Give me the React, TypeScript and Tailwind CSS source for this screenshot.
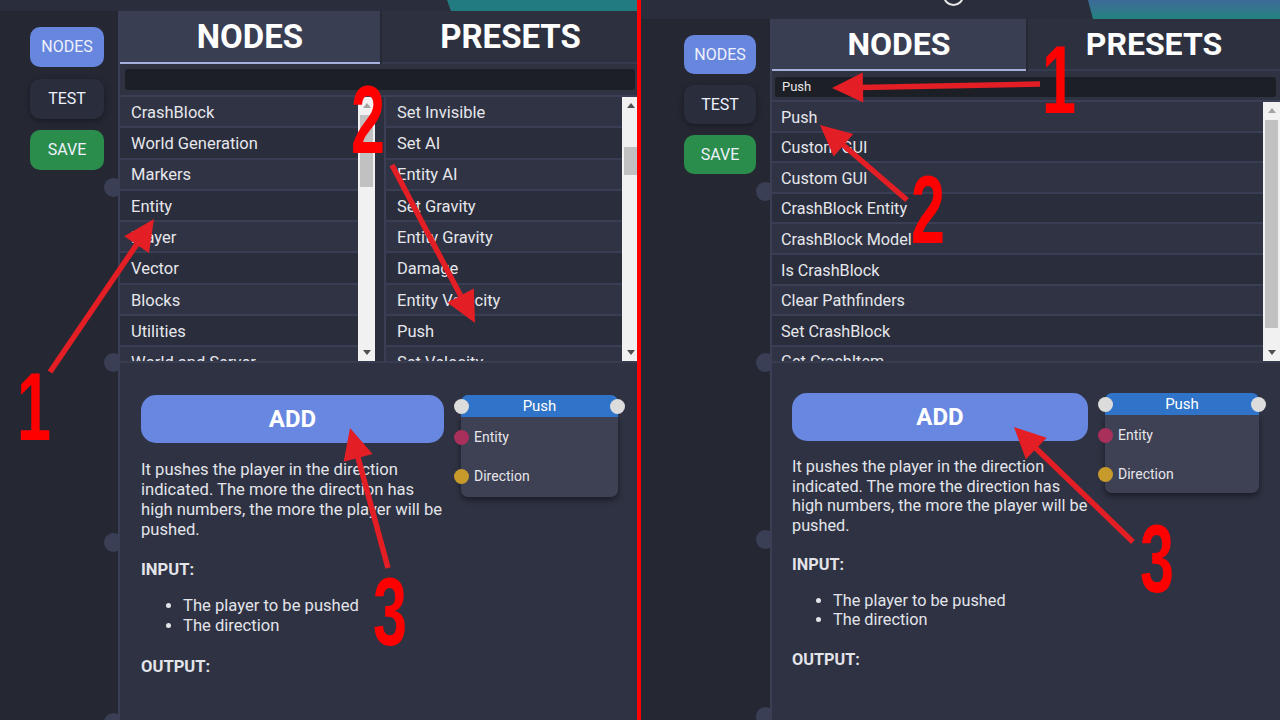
import React from "react";

const LEFT_NODES = ["CrashBlock", "World Generation", "Markers", "Entity", "Player", "Vector", "Blocks", "Utilities", "World and Server"];
const LEFT_PRESETS = ["Set Invisible", "Set AI", "Entity AI", "Set Gravity", "Entity Gravity", "Damage", "Entity Velocity", "Push", "Set Velocity"];
const RIGHT_LIST = ["Push", "Custom GUI", "Custom GUI", "CrashBlock Entity", "CrashBlock Model", "Is CrashBlock", "Clear Pathfinders", "Set CrashBlock", "Get CrashItem"];

function SideButtons({ wrap, btn }: { wrap: string; btn: string }) {
  return (
    <div className={`shrink-0 bg-[#252733] flex flex-col ${wrap}`}>
      <div className={`${btn} rounded-[10px] bg-[#6786de] text-[#eef1fb] flex items-center justify-center`}>NODES</div>
      <div className={`${btn} rounded-[10px] bg-[#2a2d3c] text-[#eef1fb] flex items-center justify-center shadow-[0_2px_6px_rgba(0,0,0,0.35)]`}>TEST</div>
      <div className={`${btn} rounded-[10px] bg-[#2b8d4c] text-[#eef1fb] flex items-center justify-center`}>SAVE</div>
    </div>
  );
}

function Tabs({ h, nodesW, text }: { h: string; nodesW: string; text: string }) {
  return (
    <div className={`${h} shrink-0 flex bg-[#262834]`}>
      <div className={`${nodesW} h-full bg-[#3a3e53] border-b-2 border-[#a6b0dc] flex items-center justify-center text-white font-bold ${text}`}>NODES</div>
      <div className={`flex-1 ml-[2px] h-full bg-[#2d313f] border-b-2 border-[#363a4e] flex items-center justify-center text-white font-bold ${text}`}>PRESETS</div>
    </div>
  );
}

function Rows({ items, rowCls }: { items: string[]; rowCls: string }) {
  return (
    <div className="flex-1 min-w-0 h-full overflow-hidden flex flex-col">
      {items.map((t, i) => (
        <div
          key={i}
          className={`${rowCls} shrink-0 flex items-center pt-[3px] border-b-2 border-[#393e54] text-[#e6e7ec] whitespace-nowrap ${i % 2 === 0 ? "bg-[#2f3343]" : "bg-[#2a2d3b]"}`}
        >
          {t}
        </div>
      ))}
    </div>
  );
}

function Scrollbar({ thumb, upDark }: { thumb: string; upDark?: boolean }) {
  return (
    <div className="w-[17px] shrink-0 h-full bg-[#f1f1f1] flex flex-col">
      <div className="h-[17px] shrink-0 w-full flex items-center justify-center">
        <svg width="8" height="5" viewBox="0 0 8 5"><path d="M4 0L8 5H0Z" fill={upDark ? "#505050" : "#a3a3a3"} /></svg>
      </div>
      <div className="flex-1 w-full px-[2px]">
        <div className={`${thumb} bg-[#c1c1c1] w-full`} />
      </div>
      <div className="h-[17px] shrink-0 w-full flex items-center justify-center">
        <svg width="8" height="5" viewBox="0 0 8 5"><path d="M0 0H8L4 5Z" fill="#505050" /></svg>
      </div>
    </div>
  );
}

function NodeCard({ wrap, body }: { wrap: string; body: string }) {
  return (
    <div className={`relative shrink-0 self-start ${wrap}`}>
      <div className="relative h-[22px] bg-[#2f74c8] rounded-t-[7px] text-white text-[15px] flex items-center justify-center">
        Push
        <span className="absolute -left-[7px] top-[4px] w-[15px] h-[15px] rounded-full bg-[#dcdcdc]" />
        <span className="absolute -right-[7px] top-[4px] w-[15px] h-[15px] rounded-full bg-[#dcdcdc]" />
      </div>
      <div className={`${body} bg-[#3e4054] rounded-b-[7px] shadow-[0_3px_6px_rgba(0,0,0,0.45)] pt-[10px] flex flex-col gap-[19px]`}>
        <div className="relative h-[20px] pl-[13px] flex items-center text-[14px] text-[#e6e6ea]">
          <span className="absolute -left-[7px] top-[2.5px] w-[15px] h-[15px] rounded-full bg-[#a8305a]" />
          Entity
        </div>
        <div className="relative h-[20px] pl-[13px] flex items-center text-[14px] text-[#e6e6ea]">
          <span className="absolute -left-[7px] top-[2.5px] w-[15px] h-[15px] rounded-full bg-[#c79a2c]" />
          Direction
        </div>
      </div>
    </div>
  );
}

function Description({ desc, input, list, output }: { desc: string; input: string; list: string; output: string }) {
  return (
    <div className="text-[#e3e4ea]">
      <p className={`${desc} whitespace-nowrap`}>
        It pushes the player in the direction<br />indicated. The more the direction has<br />high numbers, the more the player will be<br />pushed.
      </p>
      <p className={`${input} font-bold`}>INPUT:</p>
      <ul className={`${list} list-disc`}>
        <li>The player to be pushed</li>
        <li>The direction</li>
      </ul>
      <p className={`${output} font-bold`}>OUTPUT:</p>
    </div>
  );
}

function LeftHalf() {
  return (
    <div className="relative w-[637px] h-full shrink-0 overflow-hidden flex flex-col">
      <div className="h-[11px] shrink-0 bg-[#2a2d3b] flex justify-end">
        <div className="w-[190px] h-full bg-[#217b81] [clip-path:polygon(0_0,100%_0,100%_100%,4px_100%)]" />
      </div>
      <div className="flex flex-1 min-h-0">
        <SideButtons wrap="w-[118px] pl-[30px] pt-[16px] gap-[11.5px]" btn="w-[74px] h-[40px] text-[16px]" />
        <div className="relative z-10 w-[521px] shrink-0 flex flex-col bg-[#2e3241] border-l-2 border-[#3a3f56]">
          <Tabs h="h-[53px]" nodesW="w-[260px]" text="text-[33px]" />
          <div className="shrink-0 pt-[5px] pb-[5px] pl-[5px] pr-[4px] border-b-2 border-[#3a3f56]">
            <div className="h-[21px] rounded-[3px] bg-[#1d1f26]" />
          </div>
          <div className="h-[264px] shrink-0 flex">
            <div className="w-[255px] h-full flex">
              <Rows items={LEFT_NODES} rowCls="h-[31.3px] pl-[11px] text-[16.5px]" />
              <Scrollbar thumb="mt-[1px] h-[72px]" />
            </div>
            <div className="w-[11px] h-full bg-[#2b2e3c] border-r-2 border-[#3a3f56]" />
            <div className="flex-1 h-full flex">
              <Rows items={LEFT_PRESETS} rowCls="h-[31.3px] pl-[11px] text-[16.5px]" />
              <Scrollbar thumb="mt-[33px] h-[28px]" upDark />
            </div>
          </div>
          <div className="flex-1 bg-[#2e3242] border-t-2 border-[#383c50] flex pl-[21px] pt-[32px]">
            <div className="w-[303px] shrink-0 flex flex-col">
              <div className="h-[48px] rounded-[15px] bg-[#6787e0] text-white text-[24px] font-bold flex items-center justify-center">ADD</div>
              <Description
                desc="mt-[17px] text-[16.6px] leading-[20px]"
                input="mt-[20px] text-[16.6px] leading-[20px]"
                list="mt-[16px] pl-[42px] text-[16.6px] leading-[20px]"
                output="mt-[21px] text-[16.6px] leading-[20px]"
              />
            </div>
            <NodeCard wrap="ml-[17px] w-[157px]" body="h-[80px]" />
          </div>
        </div>
      </div>
      <span className="absolute left-[104px] top-[178px] w-[19px] h-[19px] rounded-full bg-[#3a3f55]" />
      <span className="absolute left-[104px] top-[353px] w-[19px] h-[19px] rounded-full bg-[#3a3f55]" />
      <span className="absolute left-[104px] top-[533px] w-[19px] h-[19px] rounded-full bg-[#3a3f55]" />
      <span className="absolute left-[104px] top-[713px] w-[19px] h-[19px] rounded-full bg-[#3a3f55]" />
    </div>
  );
}

function RightHalf() {
  return (
    <div className="relative flex-1 h-full overflow-hidden flex flex-col">
      <div className="relative h-[19px] shrink-0 bg-[#2a2d3b] flex justify-end">
        <span className="absolute left-[302px] -top-[15px] w-[21px] h-[21px] rounded-full border-2 border-[#e8e8e8]" />
        <div className="w-[192px] h-full bg-gradient-to-b from-[#3d6a98] to-[#1f8280] [clip-path:polygon(0_0,100%_0,100%_100%,5px_100%)]" />
      </div>
      <div className="flex flex-1 min-h-0">
        <SideButtons wrap="w-[129px] pl-[43px] pt-[16px] gap-[11px]" btn="w-[72px] h-[39px] text-[16px]" />
        <div className="relative z-10 flex-1 flex flex-col bg-[#2e3241] border-l-2 border-[#3a3f56]">
          <Tabs h="h-[52px]" nodesW="w-[254px]" text="text-[32px]" />
          <div className="shrink-0 pt-[6px] pb-[3px] pl-[3px] pr-[4px] border-b-2 border-[#3a3f56]">
            <div className="h-[20px] rounded-[3px] bg-[#1d1f26] pl-[7px] flex items-center text-[13px] text-[#e6e6e6]">Push</div>
          </div>
          <div className="h-[259px] shrink-0 flex">
            <Rows items={RIGHT_LIST} rowCls="h-[30.6px] pl-[9px] text-[16.2px]" />
            <Scrollbar thumb="mt-[1px] h-[208px]" />
          </div>
          <div className="flex-1 bg-[#2e3242] border-t-2 border-[#383c50] flex pl-[20px] pt-[30px]">
            <div className="w-[296px] shrink-0 flex flex-col">
              <div className="h-[48px] rounded-[15px] bg-[#6787e0] text-white text-[24px] font-bold flex items-center justify-center">ADD</div>
              <Description
                desc="mt-[16px] text-[16.3px] leading-[19.5px]"
                input="mt-[20px] text-[16.3px] leading-[19.5px]"
                list="mt-[16px] pl-[41px] text-[16.3px] leading-[19.5px]"
                output="mt-[20px] text-[16.3px] leading-[19.5px]"
              />
            </div>
            <NodeCard wrap="ml-[17px] w-[154px]" body="h-[78px]" />
          </div>
        </div>
      </div>
      <span className="absolute left-[115px] top-[182px] w-[19px] h-[19px] rounded-full bg-[#3a3f55]" />
      <span className="absolute left-[115px] top-[353px] w-[19px] h-[19px] rounded-full bg-[#3a3f55]" />
      <span className="absolute left-[115px] top-[530px] w-[19px] h-[19px] rounded-full bg-[#3a3f55]" />
      <span className="absolute left-[115px] top-[707px] w-[19px] h-[19px] rounded-full bg-[#3a3f55]" />
    </div>
  );
}

function Arrow({ x1, y1, x2, y2 }: { x1: number; y1: number; x2: number; y2: number }) {
  const L = 31;
  const hw = 15;
  const dx = x2 - x1;
  const dy = y2 - y1;
  const len = Math.hypot(dx, dy);
  const ux = dx / len;
  const uy = dy / len;
  const bx = x2 - ux * L;
  const by = y2 - uy * L;
  const px = -uy;
  const py = ux;
  return (
    <g>
      <line x1={x1} y1={y1} x2={bx + ux * 3} y2={by + uy * 3} stroke="#e31e24" strokeWidth={5.5} />
      <polygon points={`${x2},${y2} ${bx + px * hw},${by + py * hw} ${bx - px * hw},${by - py * hw}`} fill="#e31e24" />
    </g>
  );
}

function Num({ x, y, t }: { x: number; y: number; t: string }) {
  return (
    <text
      transform={`translate(${x},${y}) scale(0.63,1)`}
      fontFamily="'Liberation Sans', Arial, sans-serif"
      fontWeight="bold"
      fontSize={97}
      fill="#ff0000"
    >
      {t}
    </text>
  );
}

function Annotations() {
  return (
    <svg className="absolute inset-0 z-20 pointer-events-none" width="1280" height="720" viewBox="0 0 1280 720">
      <Arrow x1={50} y1={372} x2={154} y2={219} />
      <Arrow x1={392} y1={165} x2={475} y2={323} />
      <Arrow x1={388} y1={568} x2={350} y2={428} />
      <Arrow x1={1040} y1={84} x2={832} y2={88} />
      <Arrow x1={907} y1={200} x2={820} y2={125} />
      <Arrow x1={1133} y1={542} x2={1014} y2={427} />
      <Num x={17} y={440} t="1" />
      <Num x={351} y={153} t="2" />
      <Num x={373} y={645} t="3" />
      <Num x={1042} y={113} t="1" />
      <Num x={911} y={243} t="2" />
      <Num x={1140} y={592} t="3" />
    </svg>
  );
}

export default function App() {
  return (
    <div className="relative w-[1280px] h-[720px] overflow-hidden flex bg-[#252733] font-['Roboto','Noto_Sans',sans-serif]">
      <LeftHalf />
      <div className="w-[4px] h-full bg-[#ff0000] shrink-0" />
      <RightHalf />
      <Annotations />
    </div>
  );
}
